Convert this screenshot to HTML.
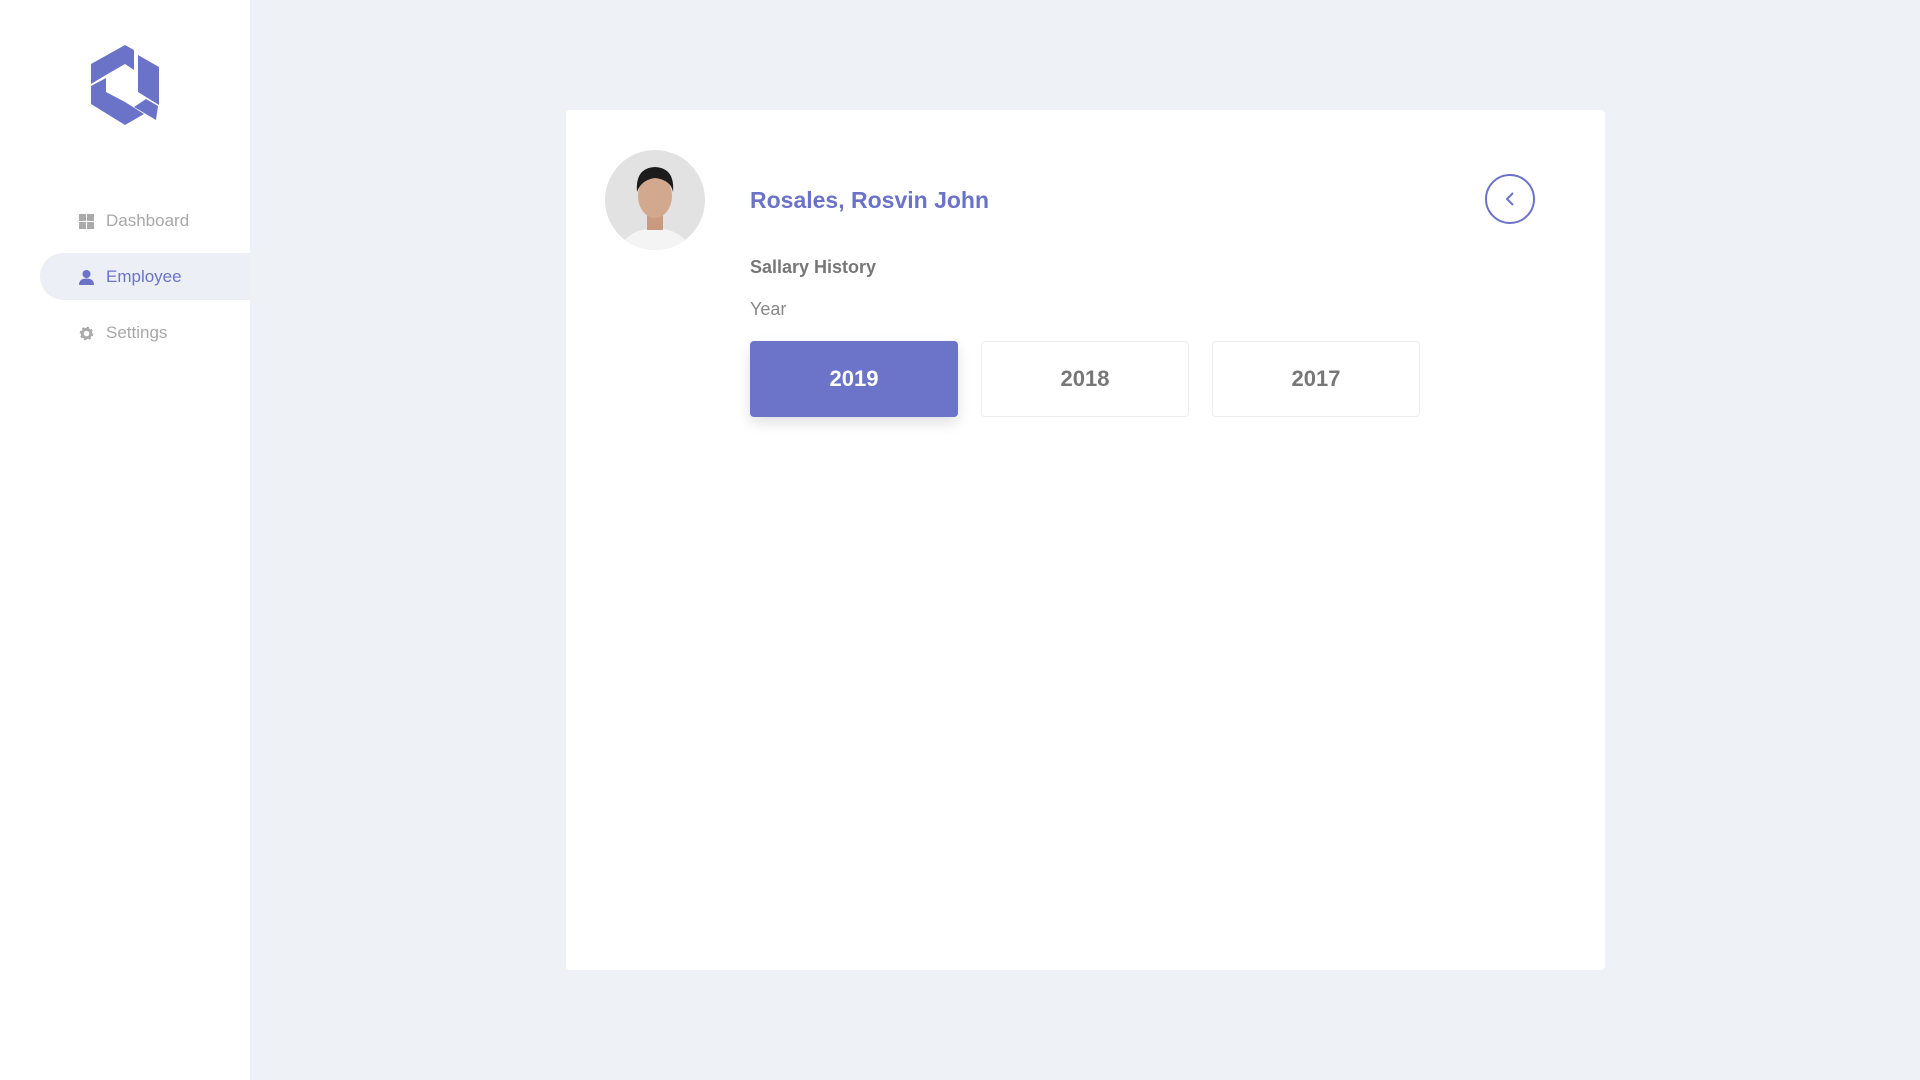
<!DOCTYPE html>
<html><head><style>
*{margin:0;padding:0;box-sizing:border-box}
body{width:1920px;height:1080px;background:#eef1f6;font-family:"Liberation Sans",sans-serif;position:relative;overflow:hidden}
.side{position:absolute;left:0;top:0;width:250px;height:1080px;background:#fff}
.nav{position:absolute;left:79px;font-size:17px;color:#a8a8a8;display:flex;align-items:center;gap:12px}
.pill{position:absolute;left:40px;top:253px;width:210px;height:47px;background:#eceff6;border-radius:24px 0 0 24px}
.card{position:absolute;left:566px;top:110px;width:1039px;height:860px;background:#fff;border-radius:4px}
.btn{position:absolute;top:231px;width:208px;height:76px;border:1px solid #eceef3;border-radius:4px;font-size:22px;font-weight:bold;color:#777;display:flex;align-items:center;justify-content:center}
</style></head><body>
<div class="side">
<svg style="position:absolute;left:88px;top:42px" width="76" height="86" viewBox="0 0 76 86">
<g fill="#6b73c8">
<polygon points="37,3 3,22 3,42 18,33 37,22"/>
<polygon points="37,3 46,8 46,28 37,22"/>
<polygon points="50,13 71,25 71,63 58,55 50,50 50,30"/>
<polygon points="3,44 3,62 37,83 56,72 37,60 18,50 18,36"/>
<polygon points="46,65 58,57 70,64 68,78"/>
</g></svg>
<div class="pill"></div>
<div class="nav" style="top:211px"><svg width="15" height="15"><rect x="0" y="0" width="7" height="7" fill="#aaa"/><rect x="8" y="0" width="7" height="7" fill="#aaa"/><rect x="0" y="8" width="7" height="7" fill="#aaa"/><rect x="8" y="8" width="7" height="7" fill="#aaa"/></svg>Dashboard</div>
<div class="nav" style="top:267px;color:#6b73c8"><svg width="15" height="15"><circle cx="7.5" cy="4" r="4" fill="#6b73c8"/><path d="M0 15 Q0 8.5 7.5 8.5 Q15 8.5 15 15Z" fill="#6b73c8"/></svg>Employee</div>
<div class="nav" style="top:323px"><svg width="15" height="15" viewBox="0 0 16 16"><circle cx="8" cy="8" r="5.5" fill="none" stroke="#aaa" stroke-width="3.5" stroke-dasharray="2.2 2.1"/><circle cx="8" cy="8" r="4.5" fill="none" stroke="#aaa" stroke-width="3"/></svg>Settings</div>
</div>
<div class="card">
<svg style="position:absolute;left:39px;top:40px" width="100" height="100"><defs><clipPath id="c"><circle cx="50" cy="50" r="50"/></clipPath></defs><g clip-path="url(#c)"><rect width="100" height="100" fill="#e2e2e2"/><path d="M15 100 Q20 80 50 78 Q80 80 85 100Z" fill="#f4f4f4"/><rect x="42" y="60" width="16" height="20" fill="#c99a7e"/><ellipse cx="50" cy="46" rx="17" ry="22" fill="#d2a98e"/><path d="M32 42 Q30 18 50 17 Q70 18 68 42 Q66 30 50 28 Q36 30 32 42Z" fill="#1c1c1c"/></g></svg>
<div style="position:absolute;left:184px;top:77px;font-size:23px;font-weight:bold;color:#6b73c8">Rosales, Rosvin John</div>
<div style="position:absolute;left:919px;top:64px;width:50px;height:50px;border:2px solid #6b73c8;border-radius:50%"><svg width="46" height="46"><path d="M26 17 L20 23 L26 29" fill="none" stroke="#6b73c8" stroke-width="2"/></svg></div>
<div style="position:absolute;left:184px;top:147px;font-size:18px;font-weight:bold;color:#777">Sallary History</div>
<div style="position:absolute;left:184px;top:189px;font-size:18px;color:#888">Year</div>
<div class="btn" style="left:184px;background:#6b74c8;color:#fff;border-color:#6b74c8;box-shadow:0 6px 14px rgba(0,0,0,.12)">2019</div>
<div class="btn" style="left:415px">2018</div>
<div class="btn" style="left:646px">2017</div>
</div>
</body></html>
